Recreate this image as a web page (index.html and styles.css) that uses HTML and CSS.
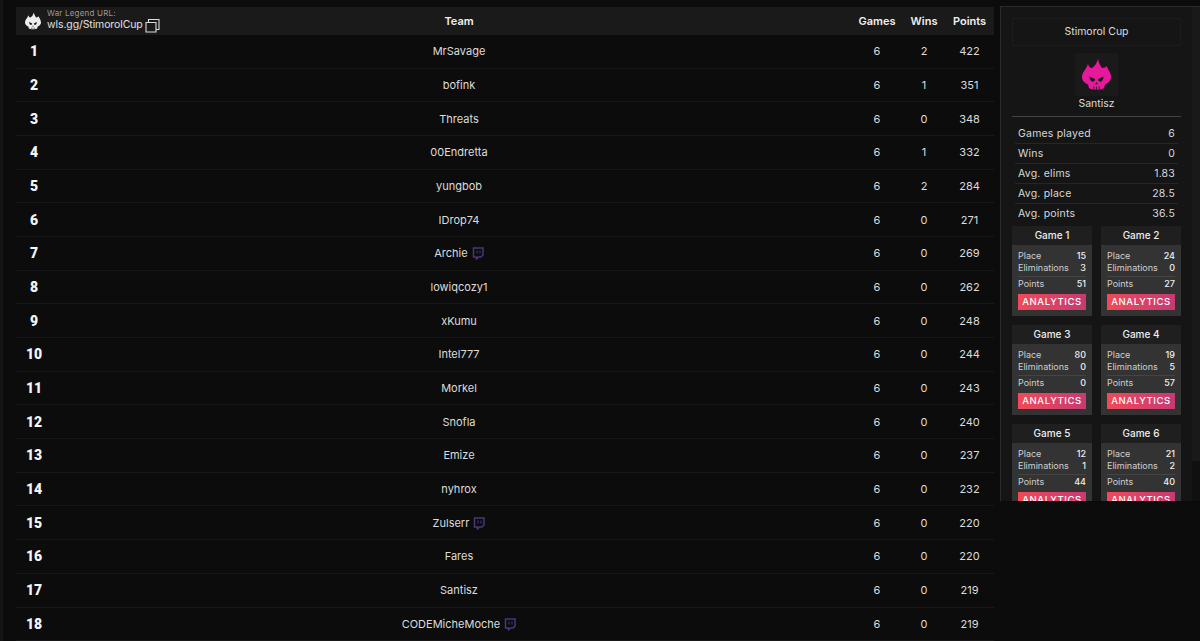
FILE: index.html
```html
<!DOCTYPE html>
<html lang="en">
<head>
<meta charset="utf-8">
<title>Stimorol Cup</title>
<link rel="stylesheet" href="styles.css">
</head>
<body>
<svg class="defs" width="0" height="0" aria-hidden="true">
  <symbol id="skull" viewBox="0 0 29 31">
    <path fill="currentColor" d="M16 0C17 4 18 6 20 9C22 9 24 8 25 7C25 10 29 13 29 18C29 22 26 24 23 25.500L22 29C20 31 9 31 7 29L6 25.500C3 24 0 22 0 18C0 13 4 11 6 5C7 8 8 9 10 9C13 7 15 4 16 0Z"/>
    <path fill="var(--eye)" d="M7.500 17.500L13 20C13 22 11.500 23 10 22.500C8.500 22 7.500 20 7.500 17.500ZM21.500 17.500L16 20C16 22 17.500 23 19 22.500C20.500 22 21.500 20 21.500 17.500ZM14.500 23L15.800 25.300H13.200ZM11.500 27.500H12.300V30H11.500ZM14.100 27.500H14.900V30.500H14.100ZM16.700 27.500H17.500V30H16.700Z"/>
  </symbol>
  <symbol id="twitch" viewBox="0 0 12 13">
    <path fill="none" stroke="currentColor" stroke-width="1.500" d="M1.500 1H11V8L9 10H6.500L4.500 12V10H1.500Z"/>
    <path fill="none" stroke="currentColor" d="M5 3.500V6.500M8 3.500V6.500"/>
  </symbol>
</svg>
<div class="page">
  <main class="board">
    <div class="row head">
      <div class="url">
        <svg class="logo"><use href="#skull"/></svg>
        <div class="url-text">
          <span class="url-label">War Legend URL:</span>
          <span class="url-link">wls.gg/StimorolCup
            <svg class="copy" viewBox="0 0 15 15"><path d="M1 4.500H11V14H1ZM3.500 4V1.500H14V11.500H11.500"/></svg>
          </span>
        </div>
      </div>
      <div class="team">Team</div><div></div><div class="num">Games</div><div class="num">Wins</div><div class="num">Points</div>
    </div>
    <div class="row"><div class="rank">1</div><div class="team">MrSavage</div><div></div><div class="num">6</div><div class="num">2</div><div class="num">422</div></div>
    <div class="row"><div class="rank">2</div><div class="team">bofink</div><div></div><div class="num">6</div><div class="num">1</div><div class="num">351</div></div>
    <div class="row"><div class="rank">3</div><div class="team">Threats</div><div></div><div class="num">6</div><div class="num">0</div><div class="num">348</div></div>
    <div class="row"><div class="rank">4</div><div class="team">00Endretta</div><div></div><div class="num">6</div><div class="num">1</div><div class="num">332</div></div>
    <div class="row"><div class="rank">5</div><div class="team">yungbob</div><div></div><div class="num">6</div><div class="num">2</div><div class="num">284</div></div>
    <div class="row"><div class="rank">6</div><div class="team">IDrop74</div><div></div><div class="num">6</div><div class="num">0</div><div class="num">271</div></div>
    <div class="row"><div class="rank">7</div><div class="team">Archie <svg class="twitch"><use href="#twitch"/></svg></div><div></div><div class="num">6</div><div class="num">0</div><div class="num">269</div></div>
    <div class="row"><div class="rank">8</div><div class="team">lowiqcozy1</div><div></div><div class="num">6</div><div class="num">0</div><div class="num">262</div></div>
    <div class="row"><div class="rank">9</div><div class="team">xKumu</div><div></div><div class="num">6</div><div class="num">0</div><div class="num">248</div></div>
    <div class="row"><div class="rank">10</div><div class="team">Intel777</div><div></div><div class="num">6</div><div class="num">0</div><div class="num">244</div></div>
    <div class="row"><div class="rank">11</div><div class="team">Morkel</div><div></div><div class="num">6</div><div class="num">0</div><div class="num">243</div></div>
    <div class="row"><div class="rank">12</div><div class="team">Snofla</div><div></div><div class="num">6</div><div class="num">0</div><div class="num">240</div></div>
    <div class="row"><div class="rank">13</div><div class="team">Emize</div><div></div><div class="num">6</div><div class="num">0</div><div class="num">237</div></div>
    <div class="row"><div class="rank">14</div><div class="team">nyhrox</div><div></div><div class="num">6</div><div class="num">0</div><div class="num">232</div></div>
    <div class="row"><div class="rank">15</div><div class="team">Zulserr <svg class="twitch"><use href="#twitch"/></svg></div><div></div><div class="num">6</div><div class="num">0</div><div class="num">220</div></div>
    <div class="row"><div class="rank">16</div><div class="team">Fares</div><div></div><div class="num">6</div><div class="num">0</div><div class="num">220</div></div>
    <div class="row"><div class="rank">17</div><div class="team">Santisz</div><div></div><div class="num">6</div><div class="num">0</div><div class="num">219</div></div>
    <div class="row"><div class="rank">18</div><div class="team">CODEMicheMoche <svg class="twitch"><use href="#twitch"/></svg></div><div></div><div class="num">6</div><div class="num">0</div><div class="num">219</div></div>
  </main>
  <aside class="panel">
    <div class="panel-title">Stimorol Cup</div>
    <div class="avatar"><svg class="avatar-icon"><use href="#skull"/></svg></div>
    <div class="player">Santisz</div>
    <div class="stats">
      <div class="stat"><span>Games played</span><span>6</span></div>
      <div class="stat"><span>Wins</span><span>0</span></div>
      <div class="stat"><span>Avg. elims</span><span>1.83</span></div>
      <div class="stat"><span>Avg. place</span><span>28.5</span></div>
      <div class="stat"><span>Avg. points</span><span>36.5</span></div>
    </div>
    <div class="games">
      <div class="game"><div class="game-title">Game 1</div><div class="game-body"><div class="line"><span>Place</span><b>15</b></div><div class="line"><span>Eliminations</span><b>3</b></div><div class="line total"><span>Points</span><b>51</b></div><div class="btn">ANALYTICS</div></div></div>
      <div class="game"><div class="game-title">Game 2</div><div class="game-body"><div class="line"><span>Place</span><b>24</b></div><div class="line"><span>Eliminations</span><b>0</b></div><div class="line total"><span>Points</span><b>27</b></div><div class="btn">ANALYTICS</div></div></div>
      <div class="game"><div class="game-title">Game 3</div><div class="game-body"><div class="line"><span>Place</span><b>80</b></div><div class="line"><span>Eliminations</span><b>0</b></div><div class="line total"><span>Points</span><b>0</b></div><div class="btn">ANALYTICS</div></div></div>
      <div class="game"><div class="game-title">Game 4</div><div class="game-body"><div class="line"><span>Place</span><b>19</b></div><div class="line"><span>Eliminations</span><b>5</b></div><div class="line total"><span>Points</span><b>57</b></div><div class="btn">ANALYTICS</div></div></div>
      <div class="game"><div class="game-title">Game 5</div><div class="game-body"><div class="line"><span>Place</span><b>12</b></div><div class="line"><span>Eliminations</span><b>1</b></div><div class="line total"><span>Points</span><b>44</b></div><div class="btn">ANALYTICS</div></div></div>
      <div class="game"><div class="game-title">Game 6</div><div class="game-body"><div class="line"><span>Place</span><b>21</b></div><div class="line"><span>Eliminations</span><b>2</b></div><div class="line total"><span>Points</span><b>40</b></div><div class="btn">ANALYTICS</div></div></div>
    </div>
    <div class="scrollbar"><div class="scroll-thumb"></div></div>
  </aside>
</div>
</body>
</html>
```
FILE: styles.css
```css
* { box-sizing: border-box; }
html, body { margin: 0; height: 100%; overflow: hidden; }
body {
  background: #0c0c0c;
  color: #dcdcdc;
  font-family: Inter, "Liberation Sans", sans-serif;
  font-size: 11px;
  border-left: 3px solid #151515;
}
.defs { position: absolute; }
.page { display: flex; align-items: flex-start; padding-top: 6px; }
.board { width: 978px; margin-left: 13px; padding-top: 1px; flex: none; }
.row {
  display: grid;
  grid-template-columns: 160px 566px 111px 48px 46px 45px;
  padding-right: 2px;
  height: 33.7px;
  align-items: center;
  border-bottom: 1px solid #181818;
}
.row.head {
  height: 28px;
  background: #1a1a1a;
  border-bottom: 0;
  color: #f0f0f0;
  font-weight: 600;
  margin-bottom: -1px;
}
.head + .row { height: 34.5px; }
.rank {
  width: 36px;
  text-align: center;
  font-family: Roboto, sans-serif;
  font-weight: 900;
  font-size: 14px;
  color: #f4f4f4;
  white-space: nowrap;
}
.team { text-align: center; white-space: nowrap; }
.num { text-align: center; }
.twitch { width: 12px; height: 13px; color: #4a3678; vertical-align: -3px; margin-left: 1px; }
.url { display: flex; align-items: center; gap: 6px; padding-left: 9px; font-weight: 400; }
.logo { width: 16px; height: 18px; color: #eee; --eye: #1a1a1a; flex: none; }
.url-text { display: flex; flex-direction: column; line-height: 11px; white-space: nowrap; }
.url-label { font-size: 8px; color: #999; line-height: 8px; letter-spacing: .2px; }
.url-link { font-size: 10.500px; letter-spacing: -.1px; color: #e0e0e0; line-height: 14px; display: flex; align-items: center; gap: 2px; }
.copy { width: 15px; height: 15px; fill: none; stroke: #ddd; stroke-width: 1.100; margin-top: 1px; }
.panel {
  position: relative;
  margin-left: 6px;
  width: 200px;
  height: 496px;
  flex: none;
  overflow: hidden;
  background: #151515;
  border: 1px solid #2a2a2a;
  border-right: 0;
  border-bottom-color: #0a0a0a;
  padding: 11px 0 0 11px;
}
.scrollbar {
  position: absolute;
  top: 0;
  right: 0;
  bottom: 0;
  width: 8px;
  background: #101010;
}
.scroll-thumb { height: 454px; background: #191919; }
.panel-title {
  width: 169px;
  height: 28px;
  border: 1px solid #1c1c1c;
  text-align: center;
  line-height: 26px;
  font-size: 10.500px;
  color: #ddd;
}
.avatar {
  width: 43px;
  height: 43px;
  margin: 7px 0 0 63px;
  background: #1a1a1a;
  display: flex;
  align-items: center;
  justify-content: center;
}
.avatar-icon { width: 29px; height: 31px; color: #e6189b; --eye: #1a1a1a; }
.player {
  width: 169px;
  text-align: center;
  height: 21px;
  line-height: 15px;
  border-bottom: 1px solid #444;
  font-size: 10.500px;
}
.stats { width: 169px; padding: 7px 3px 0; }
.stat {
  display: flex;
  justify-content: space-between;
  height: 20px;
  line-height: 19px;
  padding: 0 3px;
  border-bottom: 1px solid #262626;
  font-size: 10.500px;
  letter-spacing: .2px;
  color: #d8d8d8;
}
.stat:last-child { border-bottom: 0; }
.games { display: grid; grid-template-columns: 80px 80px; gap: 9px; margin-top: 2px; }
.game { background: #1f1f1f; height: 90px; }
.game-title { height: 19px; line-height: 18px; text-align: center; font-size: 10px; font-weight: 500; color: #eee; }
.game-body { background: #333; height: 71px; padding: 5px 6px; font-size: 9px; }
.line { display: flex; justify-content: space-between; height: 12px; line-height: 12px; color: #d0d0d0; }
.line b { font-weight: 500; color: #eee; }
.total { border-top: 1px solid #444; margin-top: 2px; height: 16px; padding-top: 1px; }
.btn {
  height: 16px;
  line-height: 15px;
  text-align: center;
  margin-top: 2px;
  background: linear-gradient(90deg, #f04a58, #c63a74);
  color: #fff;
  font-size: 9.500px;
  font-weight: 500;
  letter-spacing: .6px;
}
```
